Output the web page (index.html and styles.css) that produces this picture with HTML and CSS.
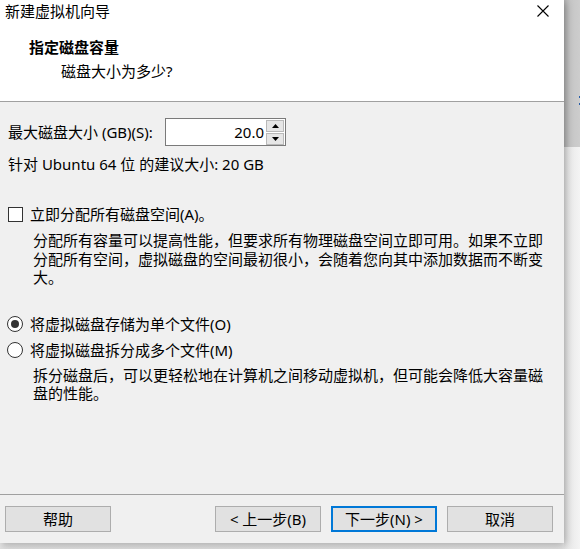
FILE: index.html
```html
<!DOCTYPE html>
<html lang="zh-CN">
<head>
<meta charset="utf-8">
<title>新建虚拟机向导</title>
<link rel="stylesheet" href="styles.css">
</head>
<body>
<div class="screen">
  <div class="dialog">
    <div class="top">
      <div class="titlebar">
        <span class="title">新建虚拟机向导</span>
        <svg class="close" width="12" height="12" viewBox="0 0 12 12"><path d="M0.5 0.5 L11.5 11.5 M11.5 0.5 L0.5 11.5" stroke="#000" stroke-width="1.1" fill="none"/></svg>
      </div>
      <div class="hdr-title">指定磁盘容量</div>
      <div class="hdr-sub">磁盘大小为多少?</div>
    </div>
    <div class="content">
      <div class="size-row">
        <span class="size-label">最大磁盘大小 (GB)(S):</span>
        <div class="spin-input">
          <span class="spin-value">20.0</span>
          <div class="spin-btns">
            <span class="spin-btn"><svg width="7" height="4" viewBox="0 0 7 4"><path d="M0 4 L3.5 0 L7 4 Z" fill="#000"/></svg></span>
            <span class="spin-btn"><svg width="7" height="4" viewBox="0 0 7 4"><path d="M0 0 L7 0 L3.5 4 Z" fill="#000"/></svg></span>
          </div>
        </div>
      </div>
      <div class="hint">针对 Ubuntu 64 位 的建议大小: 20 GB</div>
      <div class="opt check-row"><span class="checkbox"></span><span>立即分配所有磁盘空间(A)。</span></div>
      <p class="desc desc-alloc">分配所有容量可以提高性能，但要求所有物理磁盘空间立即可用。如果不立即<br>分配所有空间，虚拟磁盘的空间最初很小，会随着您向其中添加数据而不断变<br>大。</p>
      <div class="opt radio-row radio-first"><span class="radio checked"></span><span>将虚拟磁盘存储为单个文件(O)</span></div>
      <div class="opt radio-row radio-second"><span class="radio"></span><span>将虚拟磁盘拆分成多个文件(M)</span></div>
      <p class="desc desc-split">拆分磁盘后，可以更轻松地在计算机之间移动虚拟机，但可能会降低大容量磁<br>盘的性能。</p>
    </div>
    <div class="footer">
      <button class="btn">帮助</button>
      <button class="btn btn-back">&lt; 上一步(B)</button>
      <button class="btn btn-default">下一步(N) &gt;</button>
      <button class="btn">取消</button>
    </div>
  </div>
  <div class="backdrop">
    <div class="backdrop-top"><span class="mark"></span></div>
    <div class="backdrop-bottom"></div>
  </div>
</div>
</body>
</html>
```

FILE: styles.css
```css
* { box-sizing: border-box; }
html, body {
  margin: 0;
  padding: 0;
  width: 580px;
  height: 549px;
  overflow: hidden;
  background: #ececec;
}
body {
  font-family: "Noto Sans", "Noto Sans CJK SC", sans-serif;
  font-size: 15px;
  line-height: 19px;
  color: #000;
}
.screen {
  display: flex;
  width: 580px;
  height: 549px;
  background: linear-gradient(to bottom, #f0f0f0 0, #f0f0f0 543px, #e2e2e2 549px);
}
.dialog {
  position: relative;
  z-index: 1;
  width: 564px;
  height: 543px;
  flex: none;
  background: #f0f0f0;
  display: flex;
  flex-direction: column;
  box-shadow: 1px 2px 8px rgba(0, 0, 0, 0.32);
}
.top {
  height: 102px;
  background: #fff;
  border-bottom: 1px solid #a0a0a0;
  flex: none;
}
.titlebar {
  height: 30px;
  padding: 2px 15px 0 5px;
  display: flex;
  justify-content: space-between;
  align-items: flex-start;
}
.close { margin-top: 3px; display: block; }
.hdr-title {
  margin-top: 8px;
  padding-left: 29px;
  font-weight: bold;
}
.hdr-sub {
  margin-top: 5px;
  padding-left: 61px;
}
.content {
  flex: 1;
  padding-left: 8px;
}
.size-row {
  margin-top: 16px;
  height: 28px;
  display: flex;
  align-items: center;
}
.size-label { width: 157px; flex: none; }
.spin-input {
  width: 121px;
  height: 28px;
  border: 1px solid #7a7a7a;
  background: #fff;
  display: flex;
  align-items: center;
  padding: 0 1px 0 4px;
}
.spin-value {
  flex: 1;
  text-align: right;
  padding-right: 2px;
}
.spin-btns {
  display: flex;
  flex-direction: column;
  gap: 1px;
  width: 18px;
}
.spin-btn {
  height: 12px;
  background: #e6e6e6;
  border: 1px solid #b9b9b9;
  display: flex;
  align-items: center;
  justify-content: center;
}
.spin-btn svg { display: block; }
.hint { margin-top: 9px; }
.opt {
  display: flex;
  align-items: center;
  gap: 7px;
}
.check-row { margin-top: 31px; }
.checkbox {
  width: 15px;
  height: 15px;
  border: 1px solid #333;
  background: #fff;
  flex: none;
}
.desc {
  margin: 0 0 0 25px;
  line-height: 18.5px;
}
.desc-alloc { margin-top: 7px; }
.radio-first { margin-top: 28px; }
.radio-second { margin-top: 7px; }
.radio {
  width: 16px;
  height: 16px;
  margin-left: -1px;
  border: 1px solid #333;
  border-radius: 50%;
  background: #fff;
  flex: none;
  display: flex;
  align-items: center;
  justify-content: center;
}
.radio.checked::after {
  content: "";
  width: 8px;
  height: 8px;
  border-radius: 50%;
  background: #333;
}
.desc-split { margin-top: 6px; }
.footer {
  height: 49px;
  flex: none;
  border-top: 1px solid #a0a0a0;
  display: flex;
  align-items: flex-start;
  gap: 10px;
  padding: 11px 11px 0 5px;
}
.btn {
  width: 106px;
  height: 26px;
  background: #e1e1e1;
  border: 1px solid #adadad;
  font: inherit;
  color: #000;
  padding: 0;
  margin: 0;
  line-height: 19px;
}
.btn-back { margin-left: auto; }
.btn-default { border: 2px solid #0078d7; }
.backdrop {
  flex: 1;
  display: flex;
  flex-direction: column;
}
.backdrop-top {
  height: 147px;
  background: linear-gradient(to right, #b4b4b4, #c6c6c6 40%, #cdcdcd);
  display: flex;
  justify-content: flex-end;
  align-items: flex-start;
  padding-top: 96px;
}
.mark {
  width: 1px;
  height: 9px;
  background: linear-gradient(to bottom, #2a5fa8 0, #2a5fa8 2px, transparent 2px, transparent 7px, #2a5fa8 7px);
}
.backdrop-bottom {
  flex: 1;
  background: linear-gradient(to right, #e4e4e4, #f4f4f4);
}
```
